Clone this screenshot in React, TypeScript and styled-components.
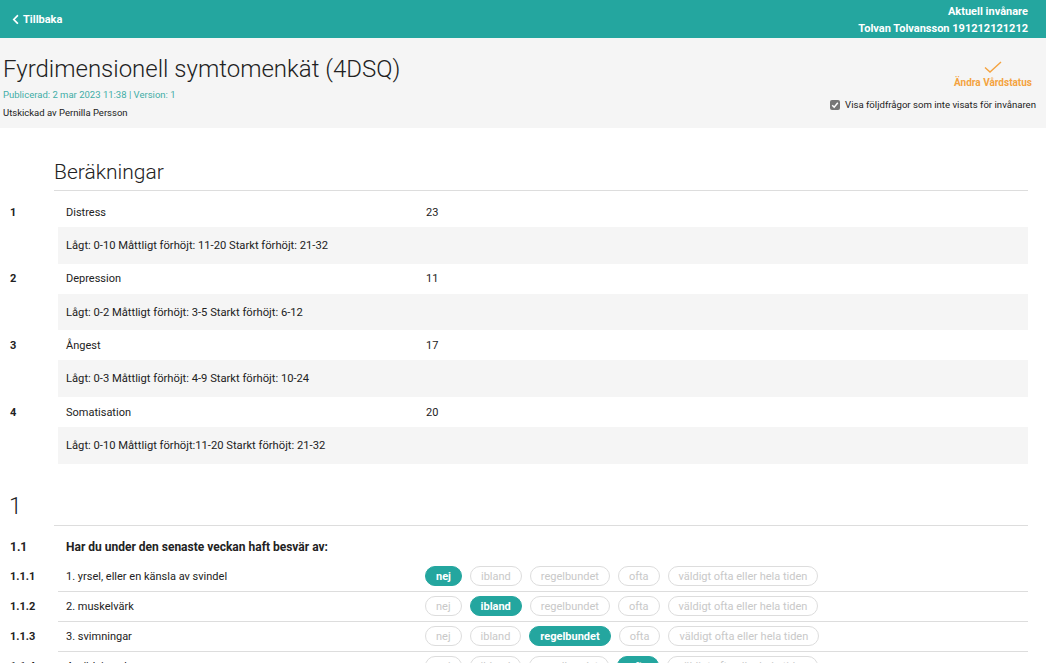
import React from "react";
import styled, { createGlobalStyle } from "styled-components";
import { FaChevronLeft } from "react-icons/fa";

const TEAL = "#24a69f";
const ORANGE = "#f4a340";

const GlobalStyle = createGlobalStyle`
  html, body { margin: 0; padding: 0; background: #fff; }
  body {
    font-family: Roboto, "Noto Sans", Arial, sans-serif;
    color: #222;
    -webkit-font-smoothing: antialiased;
  }
  * { box-sizing: border-box; }
`;

const TopBar = styled.header`
  height: 38px;
  background: ${TEAL};
  color: #fff;
  display: flex;
  align-items: center;
  justify-content: space-between;
  padding: 0 18px 0 10px;
`;

const BackLink = styled.a`
  display: flex;
  align-items: center;
  gap: 2px;
  font-size: 11px;
  font-weight: 700;
  color: #fff;
  cursor: pointer;
`;

const Citizen = styled.div`
  text-align: right;
  font-size: 11px;
  font-weight: 700;
  line-height: 17px;
  padding-top: 1px;
`;

const InfoPanel = styled.section`
  height: 90px;
  background: #f5f5f5;
  display: flex;
  justify-content: space-between;
  padding: 17px 10px 0 3px;
`;

const TitleBlock = styled.div`
  display: flex;
  flex-direction: column;
`;

const Title = styled.h1`
  margin: 0;
  font-size: 24px;
  font-weight: 300;
  line-height: 29px;
  color: #222;
`;

const Meta = styled.div<{ $accent?: boolean }>`
  font-size: 9.5px;
  line-height: 14px;
  margin-top: 4px;
  color: ${(p) => (p.$accent ? "#3fada6" : "#222")};
`;

const Actions = styled.div`
  display: flex;
  flex-direction: column;
  align-items: flex-end;
  padding-top: 6px;
`;

const StatusButton = styled.button`
  display: flex;
  flex-direction: column;
  align-items: center;
  gap: 4px;
  background: none;
  border: 0;
  padding: 0;
  margin-right: 4px;
  font-family: inherit;
  font-size: 10px;
  font-weight: 700;
  color: ${ORANGE};
  cursor: pointer;
`;

const CheckLabel = styled.label`
  display: flex;
  align-items: center;
  gap: 5px;
  margin-top: 11px;
  font-size: 9.6px;
  color: #222;
`;

const Box = styled.span`
  width: 10px;
  height: 10px;
  border-radius: 2px;
  background: #777;
  display: inline-flex;
  align-items: center;
  justify-content: center;
`;

const Main = styled.main`
  padding: 0 18px 0 0;
`;

const SectionHead = styled.div<{ $top: number }>`
  margin-top: ${(p) => p.$top}px;
`;

const SectionTitle = styled.h2<{ $indent: number; $size: number }>`
  margin: 0;
  padding-left: ${(p) => p.$indent}px;
  font-size: ${(p) => p.$size}px;
  font-weight: 300;
  line-height: 24px;
  color: #222;
`;

const Rule = styled.hr`
  margin: 6px 0 0 54px;
  border: 0;
  border-top: 1px solid #ddd;
`;

const CalcList = styled.div`
  margin-top: 6px;
`;

const CalcItem = styled.div`
  display: grid;
  grid-template-columns: 58px 1fr;
`;

const Num = styled.div<{ $size?: number; $h?: number }>`
  padding-left: 10px;
  height: ${(p) => p.$h ?? 30}px;
  display: flex;
  align-items: center;
  font-size: ${(p) => p.$size ?? 11}px;
  font-weight: 700;
`;

const CalcLine = styled.div`
  display: grid;
  grid-template-columns: 360px 1fr;
  align-items: center;
  height: 30px;
  padding-left: 8px;
  font-size: 11px;
`;

const Range = styled.div`
  background: #f5f5f5;
  height: 36.7px;
  display: flex;
  align-items: center;
  padding-left: 8px;
  font-size: 11.2px;
`;

const QuestionList = styled.div`
  margin-top: 7px;
`;

const QRow = styled.div`
  display: grid;
  grid-template-columns: 58px 1fr;
`;

const QGroupTitle = styled.div`
  height: 29px;
  display: flex;
  align-items: center;
  padding-left: 8px;
  font-size: 12px;
  font-weight: 700;
`;

const QBody = styled.div`
  display: grid;
  grid-template-columns: 359px 1fr;
  align-items: center;
  height: 30px;
  padding-left: 8px;
  border-bottom: 1px solid #ddd;
  font-size: 11px;
`;

const Pills = styled.div`
  display: flex;
  gap: 8px;
`;

const Pill = styled.span<{ $active?: boolean }>`
  height: 20px;
  padding: 0 10px;
  border-radius: 10px;
  display: inline-flex;
  align-items: center;
  font-size: 11px;
  border: 1px solid ${(p) => (p.$active ? TEAL : "#ddd")};
  background: ${(p) => (p.$active ? TEAL : "#fff")};
  color: ${(p) => (p.$active ? "#fff" : "#c8c8c8")};
  font-weight: ${(p) => (p.$active ? 700 : 400)};
`;

const calcs = [
  { n: "1", label: "Distress", value: "23", range: "Lågt: 0-10 Måttligt förhöjt: 11-20 Starkt förhöjt: 21-32" },
  { n: "2", label: "Depression", value: "11", range: "Lågt: 0-2 Måttligt förhöjt: 3-5 Starkt förhöjt: 6-12" },
  { n: "3", label: "Ångest", value: "17", range: "Lågt: 0-3 Måttligt förhöjt: 4-9 Starkt förhöjt: 10-24" },
  { n: "4", label: "Somatisation", value: "20", range: "Lågt: 0-10 Måttligt förhöjt:11-20 Starkt förhöjt: 21-32" },
];

const options = ["nej", "ibland", "regelbundet", "ofta", "väldigt ofta eller hela tiden"];

const questions = [
  { n: "1.1.1", text: "1. yrsel, eller en känsla av svindel", answer: 0 },
  { n: "1.1.2", text: "2. muskelvärk", answer: 1 },
  { n: "1.1.3", text: "3. svimningar", answer: 2 },
  { n: "1.1.4", text: "4. värk i nacken", answer: 3 },
];

export default function App() {
  return (
    <>
      <GlobalStyle />
      <TopBar>
        <BackLink>
          <FaChevronLeft size={11} />
          Tillbaka
        </BackLink>
        <Citizen>
          <div>Aktuell invånare</div>
          <div>Tolvan Tolvansson 191212121212</div>
        </Citizen>
      </TopBar>

      <InfoPanel>
        <TitleBlock>
          <Title>Fyrdimensionell symtomenkät (4DSQ)</Title>
          <Meta $accent>Publicerad: 2 mar 2023 11:38 | Version: 1</Meta>
          <Meta>Utskickad av Pernilla Persson</Meta>
        </TitleBlock>
        <Actions>
          <StatusButton>
            <svg width="18" height="12" viewBox="0 0 18 12" fill="none">
              <polyline points="1,6.5 6,11 17,1" stroke={ORANGE} strokeWidth="1.4" />
            </svg>
            Ändra Vårdstatus
          </StatusButton>
          <CheckLabel>
            <Box>
              <svg width="8" height="8" viewBox="0 0 8 8" fill="none">
                <polyline points="1.2,4.2 3.2,6.2 6.8,1.8" stroke="#fff" strokeWidth="1.5" />
              </svg>
            </Box>
            Visa följdfrågor som inte visats för invånaren
          </CheckLabel>
        </Actions>
      </InfoPanel>

      <Main>
        <SectionHead $top={32}>
          <SectionTitle $indent={54} $size={21}>Beräkningar</SectionTitle>
          <Rule />
        </SectionHead>
        <CalcList>
          {calcs.map((c) => (
            <CalcItem key={c.n}>
              <Num>{c.n}</Num>
              <div>
                <CalcLine>
                  <span>{c.label}</span>
                  <span>{c.value}</span>
                </CalcLine>
                <Range>{c.range}</Range>
              </div>
            </CalcItem>
          ))}
        </CalcList>

        <SectionHead $top={31}>
          <SectionTitle $indent={9} $size={23}>1</SectionTitle>
          <Rule />
        </SectionHead>
        <QuestionList>
          <QRow>
            <Num $size={12} $h={29}>1.1</Num>
            <QGroupTitle>Har du under den senaste veckan haft besvär av:</QGroupTitle>
          </QRow>
          {questions.map((q) => (
            <QRow key={q.n}>
              <Num>{q.n}</Num>
              <QBody>
                <span>{q.text}</span>
                <Pills>
                  {options.map((o, i) => (
                    <Pill key={o} $active={i === q.answer}>
                      {o}
                    </Pill>
                  ))}
                </Pills>
              </QBody>
            </QRow>
          ))}
        </QuestionList>
      </Main>
    </>
  );
}
